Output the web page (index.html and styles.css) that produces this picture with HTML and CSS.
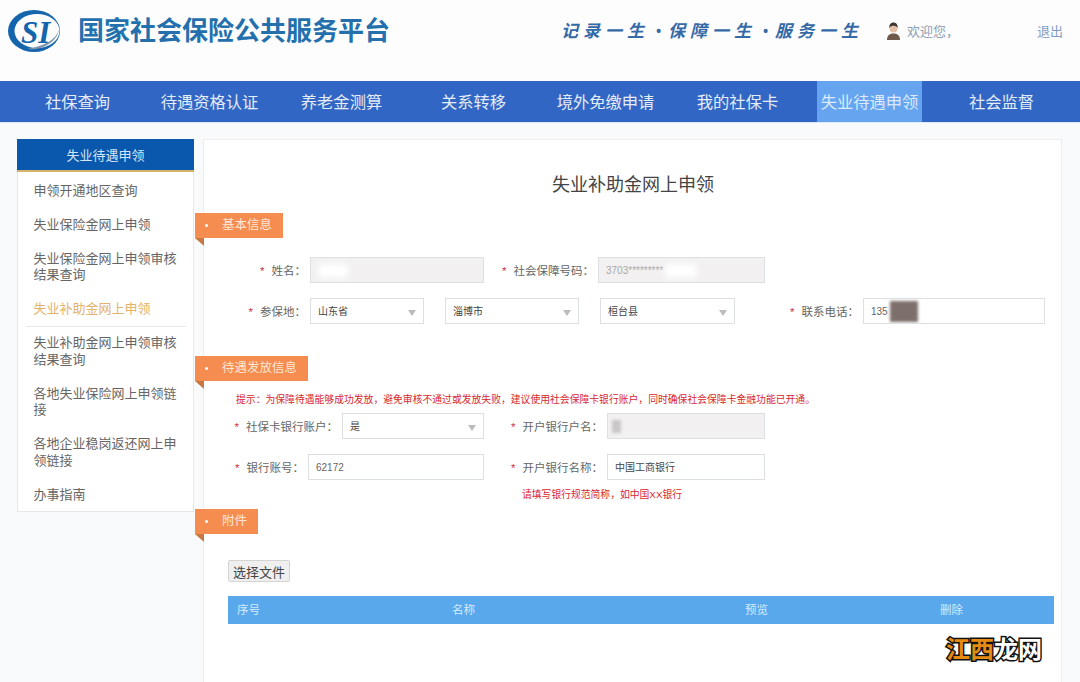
FILE: index.html
```html
<!DOCTYPE html>
<html lang="zh-CN">
<head>
    <meta charset="UTF-8">
    <meta name="viewport" content="width=device-width, initial-scale=1.0">
    <title>失业补助金网上申领</title>
    <link rel="stylesheet" href="styles.css">
</head>
<body>

    <!-- 顶部 -->
    <header class="header">
        <svg class="logo" width="54" height="44" viewBox="0 0 54 44">
            <ellipse cx="27" cy="22" rx="26" ry="21" fill="#1565ad"/>
            <ellipse cx="30" cy="22" rx="22.5" ry="17" fill="#fdfdfe"/>
            <path d="M20 40 C34 42 50 34 52 20 C50 30 38 37 20 40 Z" fill="#7f96ab"/>
            <text x="14" y="34" class="logo-text">SI</text>
        </svg>
        <h1 class="site-title">国家社会保险公共服务平台</h1>
        <div class="slogan">记录一生<span class="slogan-dot">•</span>保障一生<span class="slogan-dot">•</span>服务一生</div>
        <svg class="avatar" width="15" height="18" viewBox="0 0 15 18">
            <path d="M1 18 C1 13 4 11.500 7.500 11.500 C11 11.500 14 13 14 18 Z" fill="#6f5a4c"/>
            <circle cx="7.500" cy="6.500" r="4" fill="#e3bfa6"/>
            <path d="M3.300 6 C3 1.500 6 0.500 7.500 0.500 C9 0.500 12 1.500 11.700 6 C10.500 4 9 3.700 7.500 3.700 C6 3.700 4.500 4 3.300 6 Z" fill="#3d3430"/>
        </svg>
        <span class="welcome">欢迎您，</span>
        <a class="logout">退出</a>
    </header>

    <!-- 导航栏 -->
    <nav class="navbar">
        <a class="nav-item"><span>社保查询</span></a>
        <a class="nav-item"><span>待遇资格认证</span></a>
        <a class="nav-item"><span>养老金测算</span></a>
        <a class="nav-item"><span>关系转移</span></a>
        <a class="nav-item"><span>境外免缴申请</span></a>
        <a class="nav-item"><span>我的社保卡</span></a>
        <a class="nav-item active"><span>失业待遇申领</span></a>
        <a class="nav-item"><span>社会监督</span></a>
    </nav>

    <div class="page">
        <!-- 左侧菜单 -->
        <aside class="sidebar">
            <div class="sidebar-title">失业待遇申领</div>
            <ul class="side-menu">
                <li>申领开通地区查询</li>
                <li>失业保险金网上申领</li>
                <li>失业保险金网上申领审核结果查询</li>
                <li class="current">失业补助金网上申领</li>
                <li>失业补助金网上申领审核结果查询</li>
                <li>各地失业保险网上申领链接</li>
                <li>各地企业稳岗返还网上申领链接</li>
                <li>办事指南</li>
            </ul>
        </aside>

        <!-- 表单 -->
        <main class="panel">
            <h2 class="panel-title">失业补助金网上申领</h2>

            <div class="tag tag-base">基本信息</div>
            <div class="row row-base">
                <label class="label"><i>*</i>姓名：</label>
                <div class="field disabled"><span class="blob blob-name"></span></div>
                <label class="label"><i>*</i>社会保障号码：</label>
                <div class="field disabled muted">3703*********<span class="blob blob-id"></span></div>
            </div>
            <div class="row row-region">
                <label class="label"><i>*</i>参保地：</label>
                <div class="field select">山东省</div>
                <div class="field select region-city">淄博市</div>
                <div class="field select region-county">桓台县</div>
                <label class="label"><i>*</i>联系电话：</label>
                <div class="field soft">135<span class="blob blob-phone"></span></div>
            </div>

            <div class="tag tag-pay">待遇发放信息</div>
            <p class="tip">提示：为保障待遇能够成功发放，避免审核不通过或发放失败，建议使用社会保障卡银行账户，同时确保社会保障卡金融功能已开通。</p>
            <div class="row row-card">
                <label class="label"><i>*</i>社保卡银行账户：</label>
                <div class="field select">是</div>
                <label class="label"><i>*</i>开户银行户名：</label>
                <div class="field disabled"><span class="blob blob-holder"></span></div>
            </div>
            <div class="row row-account">
                <label class="label"><i>*</i>银行账号：</label>
                <div class="field soft">62172</div>
                <label class="label"><i>*</i>开户银行名称：</label>
                <div class="field">中国工商银行</div>
            </div>
            <p class="hint">请填写银行规范简称，如中国XX银行</p>

            <div class="tag tag-file">附件</div>
            <button class="file-button">选择文件</button>
            <div class="table-head">
                <span>序号</span>
                <span>名称</span>
                <span>预览</span>
                <span>删除</span>
            </div>
        </main>
    </div>

    <div class="watermark"><span class="wm-orange">江西</span>龙网</div>

</body>
</html>
```

FILE: styles.css
```css
/* 全局样式 */
html, body {
    height: 682px;
    overflow: hidden;
}

body {
    font-family: "Liberation Sans", "Noto Sans CJK SC", sans-serif;
    background-color: #f9fafc;
    color: #555;
    margin: 0;
    padding: 0;
    position: relative;
}

/* 顶部 */
.header {
    height: 81px;
    background: #fdfdfe;
    display: flex;
    align-items: center;
    padding: 0 17px 20px 7px;
    box-sizing: border-box;
}

.logo {
    flex: none;
}

.logo-text {
    font-family: "Liberation Serif", serif;
    font-size: 31px;
    font-weight: bold;
    font-style: italic;
    fill: #1565ad;
}

.site-title {
    margin: 0 0 0 17px;
    font-size: 26px;
    line-height: 36px;
    font-weight: bold;
    color: #2470ad;
}

.slogan {
    margin-left: auto;
    margin-bottom: 2px;
    font-size: 17px;
    font-style: italic;
    font-weight: bold;
    letter-spacing: 5px;
    color: #356aa6;
    white-space: nowrap;
}

.slogan-dot {
    display: inline-block;
    width: 19px;
    text-align: center;
    font-size: 14px;
    letter-spacing: 0;
    vertical-align: 1px;
}

.avatar {
    margin-left: 23px;
    flex: none;
}

.welcome {
    margin-left: 6px;
    width: 130px;
    font-size: 13px;
    color: #8f9db0;
}

.logout {
    font-size: 13px;
    color: #7f9cc4;
}

/* 导航栏 */
.navbar {
    height: 41px;
    background: #3266c4;
    display: flex;
    padding-left: 11.500px;
    border-bottom: 1px solid #dfeafa;
}

.nav-item {
    width: 132px;
    display: flex;
    justify-content: center;
    color: #e4ecf8;
    font-size: 16.300px;
}

.nav-item span {
    padding: 1px 4px 0;
    line-height: 41px;
    height: 40px;
}

.nav-item.active span {
    background: #66a4f0;
    color: #dcebfb;
}

/* 主体 */
.page {
    display: flex;
    align-items: flex-start;
    gap: 10px;
    padding: 16px 0 0 17px;
}

/* 左侧菜单 */
.sidebar {
    width: 177px;
    box-sizing: border-box;
    background: #fff;
    border: 1px solid #e6e8ec;
    border-top: none;
    flex: none;
}

.sidebar-title {
    height: 33px;
    margin: 0 -1px;
    box-sizing: border-box;
    background: #0a58ad;
    border-bottom: 2px solid #d5b36c;
    color: #d3e6f8;
    font-size: 13px;
    line-height: 33px;
    text-align: center;
}

.side-menu {
    list-style: none;
    margin: 2px 0 0 0;
    padding: 0 7.500px;
}

.side-menu li {
    padding: 8.750px 8px;
    font-size: 13px;
    line-height: 16.500px;
    color: #666;
}

.side-menu li:last-child {
    padding-bottom: 7.750px;
}

.side-menu li.current {
    color: #e6b26a;
    border-bottom: 1px solid #e8e8e8;
    padding-bottom: 7.750px;
}

/* 表单面板 */
.panel {
    width: 859px;
    height: 544px;
    margin-left: -1px;
    box-sizing: border-box;
    background: #fff;
    border-left: 1px solid #eceef1;
    border-right: 1px solid #eceef1;
    border-top: 1px solid #eceef1;
    flex: none;
}

.panel-title {
    margin: 33px 0 0;
    padding-left: 1px;
    height: 24px;
    font-size: 18px;
    line-height: 24px;
    font-weight: normal;
    color: #444;
    text-align: center;
}

/* 橙色标签 */
.tag {
    position: relative;
    width: fit-content;
    height: 25px;
    margin-left: -9px;
    padding: 0 11px 0 27px;
    background: #f68d50;
    color: #fde6d6;
    font-size: 12.500px;
    line-height: 25px;
}

.tag::before {
    content: "";
    position: absolute;
    left: 10px;
    top: 11px;
    width: 3px;
    height: 3px;
    border-radius: 50%;
    background: #fff;
}

.tag::after {
    content: "";
    position: absolute;
    left: 0;
    top: 100%;
    border-top: 8px solid #c9783f;
    border-left: 9px solid transparent;
}

.tag-base {
    margin-top: 16px;
}

.tag-pay {
    margin-top: 32px;
}

.tag-file {
    margin-top: 7px;
}

/* 表单行 */
.row {
    display: grid;
    height: 26px;
    align-items: center;
}

.row-base {
    grid-template-columns: 106px 174px 114px 167px;
    margin-top: 19px;
}

.row-region {
    grid-template-columns: 106px 114px 21px 134px 21px 135px 128px 182px;
    margin-top: 15px;
}

.region-city {
    grid-column: 4;
}

.region-county {
    grid-column: 6;
}

.row-card {
    grid-template-columns: 138px 142px 123px 158px;
    margin-top: 6px;
}

.row-account {
    grid-template-columns: 104px 176px 123px 158px;
    margin-top: 15px;
}

.label {
    font-size: 11.500px;
    color: #666;
    text-align: right;
    padding-right: 4px;
    white-space: nowrap;
}

.label i {
    font-style: normal;
    color: #d0304a;
    margin-right: 7px;
}

.field {
    height: 26px;
    box-sizing: border-box;
    border: 1px solid #dcdfe3;
    background: #fff;
    padding: 1px 7px 0;
    font-size: 10px;
    line-height: 24px;
    color: #444;
    display: flex;
    align-items: center;
    overflow: hidden;
    white-space: nowrap;
}

.field.disabled {
    background: #f2f0f0;
}

.field.muted {
    color: #a9a9a9;
}

.field.soft {
    color: #666;
}

.field.select {
    position: relative;
}

.field.select::after {
    content: "";
    position: absolute;
    right: 7px;
    top: 11px;
    border-top: 6px solid #bcbcbc;
    border-left: 4px solid transparent;
    border-right: 4px solid transparent;
}

/* 打码 */
.blob {
    display: inline-block;
    flex: none;
    filter: blur(3px);
}

.blob-name {
    width: 30px;
    height: 14px;
    background: #fff;
}

.blob-id {
    width: 32px;
    height: 14px;
    margin-left: 2px;
    background: #fff;
}

.blob-phone {
    width: 28px;
    height: 21px;
    margin-left: 2px;
    background: #7d6f6a;
    filter: blur(1.500px);
}

.blob-holder {
    width: 9px;
    height: 13px;
    margin-left: -3px;
    background: #c9c7c6;
    filter: blur(1.500px);
}

/* 红色提示 */
.tip {
    margin: 12px 0 0 32px;
    font-size: 9.820px;
    line-height: 14px;
    color: #d9272e;
    white-space: nowrap;
}

.hint {
    margin: 8px 0 0 318px;
    font-size: 9.800px;
    line-height: 14px;
    color: #d9272e;
}

/* 附件 */
.file-button {
    display: block;
    width: 62px;
    height: 22px;
    margin: 26px 0 0 24px;
    padding: 0;
    box-sizing: border-box;
    background: #efefef;
    border: 1px solid #d4d4d4;
    border-radius: 2px;
    font-family: inherit;
    font-size: 13px;
    color: #444;
}

.table-head {
    display: grid;
    grid-template-columns: 224px 293px 195px 1fr;
    width: 826px;
    height: 28px;
    margin: 14px 0 0 24px;
    background: #5aa8ec;
    color: #d8ebfb;
    font-size: 11.500px;
    line-height: 28px;
}

.table-head span:first-child {
    padding-left: 9px;
}

/* 水印 */
.watermark {
    position: absolute;
    left: 946px;
    top: 635px;
    font-size: 24px;
    line-height: 30px;
    font-weight: bold;
    color: #fff;
    -webkit-text-stroke: 3px #111;
    paint-order: stroke fill;
    white-space: nowrap;
}

.wm-orange {
    color: #e58a12;
}
```
